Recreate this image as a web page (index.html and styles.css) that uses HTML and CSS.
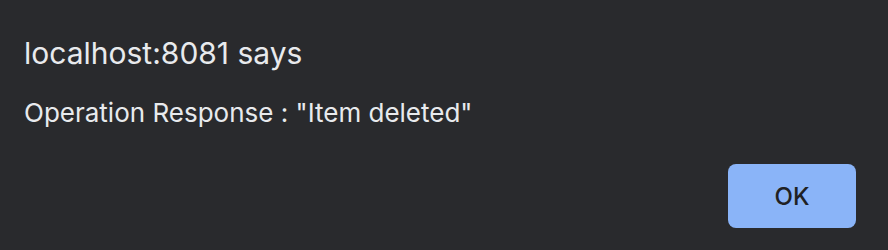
FILE: index.html
```html
<!DOCTYPE html>
<html>
<head>
<meta charset="utf-8">
<link rel="stylesheet" href="styles.css">
</head>
<body>
<div class="dialog">
  <div class="title">localhost:8081 says</div>
  <div class="message">Operation Response : "Item deleted"</div>
  <div class="actions">
    <button class="ok">OK</button>
  </div>
</div>
</body>
</html>
```
FILE: styles.css
```css
html, body {
  margin: 0;
  padding: 0;
  background: #292a2d;
  width: 888px;
  height: 250px;
  overflow: hidden;
}
.dialog {
  box-sizing: border-box;
  height: 250px;
  padding: 35px 32px 22px 24px;
  display: flex;
  flex-direction: column;
  font-family: Inter, "Noto Sans", sans-serif;
  color: #e8eaed;
}
.title {
  font-size: 30px;
  line-height: 36px;
}
.message {
  margin-top: 26px;
  font-size: 26px;
  line-height: 32px;
}
.actions {
  margin-top: auto;
  display: flex;
  justify-content: flex-end;
}
.ok {
  width: 128px;
  height: 64px;
  border: none;
  border-radius: 8px;
  background: #8ab4f8;
  color: #202124;
  font-family: Inter, "Noto Sans", sans-serif;
  font-size: 24px;
  font-weight: 500;
  padding: 0;
}
```
